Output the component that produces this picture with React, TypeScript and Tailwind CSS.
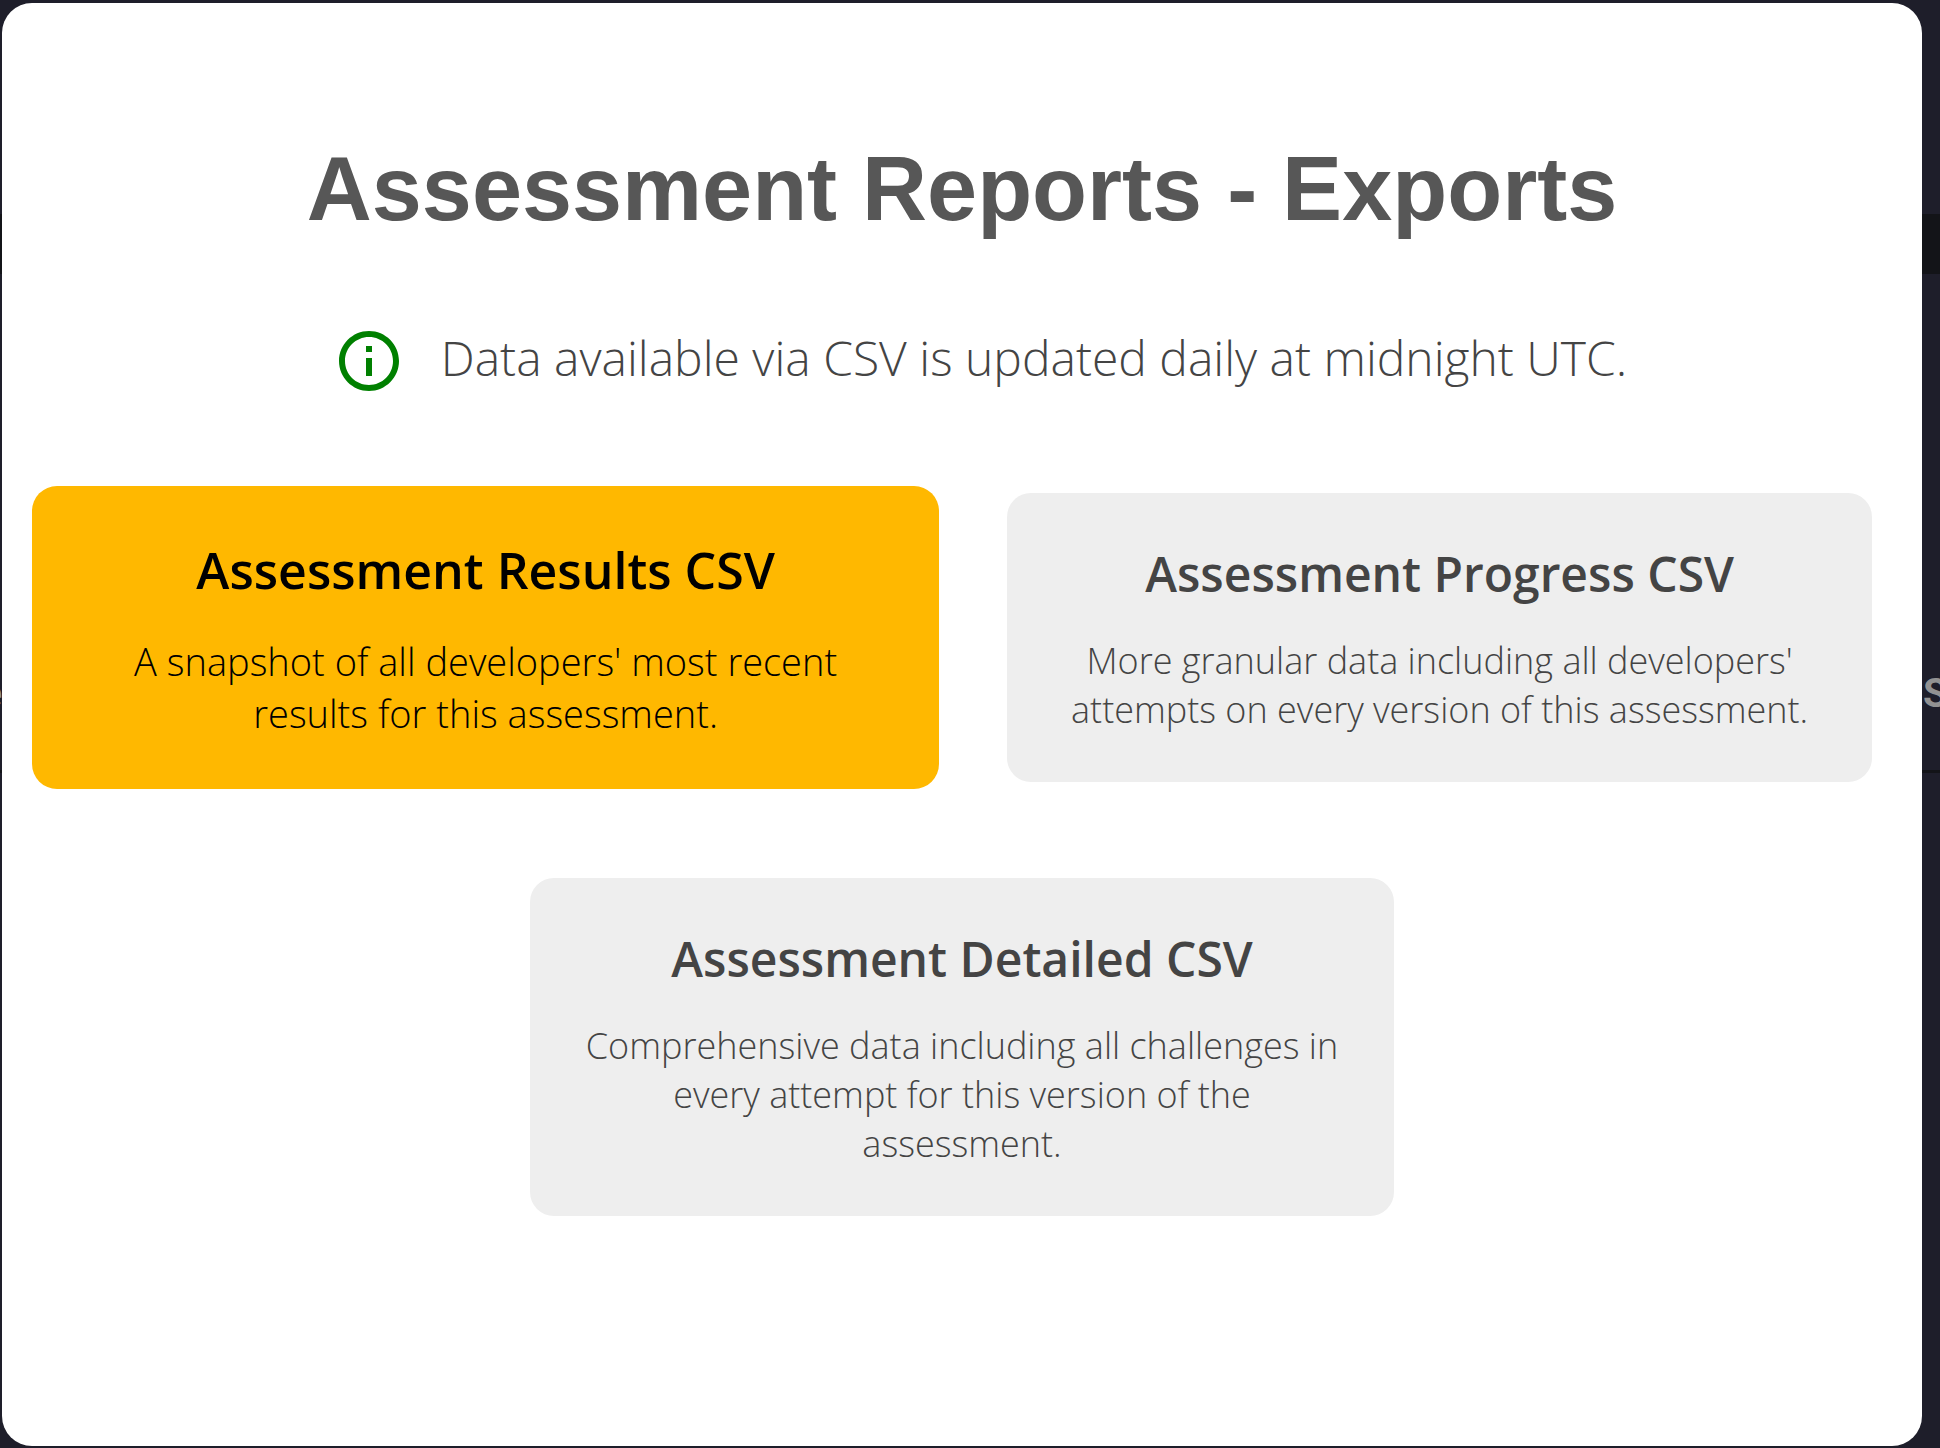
import clsx from 'clsx'

type Report = {
  title: string
  description: string
}

const detailedReport: Report = {
  title: 'Assessment Detailed CSV',
  description: 'Comprehensive data including all challenges in every attempt for this version of the assessment.',
}

function InfoIcon() {
  return (
    <svg viewBox="0 0 24 24" className="size-[72px] shrink-0 fill-[#008000]" aria-hidden="true">
      <path d="M11 7h2v2h-2zm0 4h2v6h-2zm1-9C6.48 2 2 6.48 2 12s4.48 10 10 10 10-4.48 10-10S17.52 2 12 2zm0 18c-4.41 0-8-3.59-8-8s3.59-8 8-8 8 3.59 8 8-3.59 8-8 8z" />
    </svg>
  )
}

function ReportCard({ title, description, active = false, className }: Report & { active?: boolean; className?: string }) {
  return (
    <button
      type="button"
      className={clsx(
        'block text-center cursor-pointer',
        active ? 'bg-[#ffb800] text-black rounded-[25px] p-[50px]' : 'bg-[#eeeeee] text-[#444444] rounded-3xl p-12',
        className,
      )}
    >
      <span className={clsx('block font-semibold', active ? 'text-[50px] leading-[68px] mb-[31px]' : 'text-5xl leading-[65px] mb-[30px]')}>
        {title}
      </span>
      <span className={clsx('block font-light', active ? 'text-[38px] leading-[52px]' : 'text-4xl leading-[49px]')}>
        {description}
      </span>
    </button>
  )
}

// Dimmed page that shows around the dialog
function Backdrop() {
  return (
    <div className="absolute inset-0 overflow-hidden pt-[214px] font-['Roboto',sans-serif] text-[40px] leading-[48px] font-bold text-[#929292]" aria-hidden="true">
      <div className="h-[60px] bg-[#131418]" />
      <div className="mt-[384px] flex h-[115px] justify-between border-b-[3px] border-[#131418] pt-3">
        <span className="flex w-[2px] justify-end overflow-hidden">e</span>
        <span className="w-[17px] overflow-hidden">S</span>
      </div>
    </div>
  )
}

export default function App() {
  return (
    <div className="relative flex min-h-screen bg-[#1e1e2a] pt-[3px] pr-[18px] pb-[2px] pl-[2px] font-['Open_Sans',sans-serif]">
      <Backdrop />

      <div role="dialog" aria-labelledby="exports-title" className="relative flex-1 rounded-[30px] bg-white pt-[134px] pb-12">
        <h1 id="exports-title" className="text-center font-['Liberation_Sans',Arial,sans-serif] text-[90px] leading-[104px] font-bold text-[#575757]">
          Assessment Reports - Exports
        </h1>

        <div className="mt-[84px] flex items-start justify-center gap-9 pl-9">
          <InfoIcon />
          <p className="text-5xl leading-[65px] font-light text-[#444444]">
            Data available via CSV is updated daily at midnight UTC.
          </p>
        </div>

        <div className="mt-[89px] flex items-center gap-[68px] pr-[50px] pl-[30px]">
          <ReportCard
            active
            title="Assessment Results CSV"
            description="A snapshot of all developers' most recent results for this assessment."
            className="flex-[21_1_0%]"
          />
          <ReportCard
            title="Assessment Progress CSV"
            description="More granular data including all developers' attempts on every version of this assessment."
            className="flex-[20_1_0%]"
          />
        </div>

        <ReportCard {...detailedReport} className="mx-auto mt-[89px] w-[45%]" />
      </div>
    </div>
  )
}
